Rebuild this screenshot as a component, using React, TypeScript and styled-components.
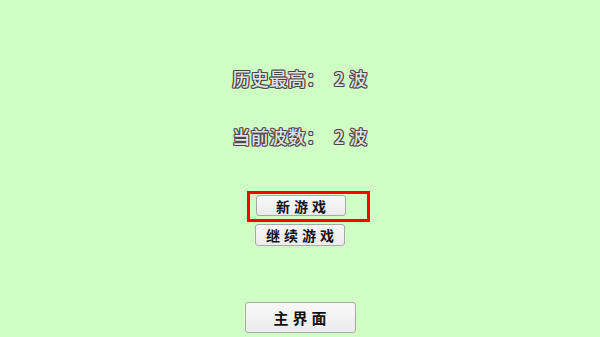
import styled, { createGlobalStyle } from "styled-components";

const GlobalStyle = createGlobalStyle`
  html, body {
    margin: 0;
    padding: 0;
  }
  body {
    background: #d0ffc6;
    font-family: "Noto Sans CJK SC", "Noto Sans", sans-serif;
  }
`;

const Screen = styled.div`
  width: 600px;
  height: 337px;
  display: flex;
  flex-direction: column;
  align-items: center;
  background: #d0ffc6;
  overflow: hidden;
`;

const Stat = styled.div<{ $top: number }>`
  margin-top: ${(p) => p.$top}px;
  height: 26px;
  line-height: 26px;
  font-size: 18px;
  font-weight: 500;
  letter-spacing: 0.5px;
  color: #e2e2e2;
  white-space: pre;
  text-shadow:
    -1px 0 0 #444,
    1px 0 0 #444,
    0 -1px 0 #444,
    0 1px 0 #444,
    -1px -1px 0 #666,
    1px 1px 0 #666,
    -1px 1px 0 #666,
    1px -1px 0 #666;
`;

const Menu = styled.div`
  margin-top: 42px;
  display: flex;
  flex-direction: column;
  align-items: center;
  gap: 2px;
`;

const Selected = styled.div`
  box-sizing: border-box;
  width: 123px;
  height: 31px;
  margin-left: 17px;
  border: 3px solid #ff0000;
  padding: 1px 0 0 6px;
`;

const Button = styled.button<{ $w: number; $h: number; $size: number }>`
  display: block;
  box-sizing: border-box;
  width: ${(p) => p.$w}px;
  height: ${(p) => p.$h}px;
  padding: 0;
  border: 1px solid #a8a8a8;
  border-radius: 3px;
  background: linear-gradient(#f8f8f8, #ececec);
  font-family: "Noto Sans CJK SC", "Noto Sans", sans-serif;
  font-size: ${(p) => p.$size}px;
  font-weight: 700;
  letter-spacing: 4px;
  text-indent: 4px;
  color: #111;
  line-height: 1;
`;

const Spacer = styled.div`
  flex: 1;
`;

const Bottom = styled.div`
  margin-bottom: 4px;
`;

export default function App() {
  return (
    <>
      <GlobalStyle />
      <Screen>
        <Stat $top={65}>历史最高：  2 波</Stat>
        <Stat $top={32}>当前波数：  2 波</Stat>
        <Menu>
          <Selected>
            <Button $w={90} $h={21} $size={14}>新游戏</Button>
          </Selected>
          <Button $w={90} $h={22} $size={14}>继续游戏</Button>
        </Menu>
        <Spacer />
        <Bottom>
          <Button $w={111} $h={31} $size={15}>主界面</Button>
        </Bottom>
      </Screen>
    </>
  );
}
